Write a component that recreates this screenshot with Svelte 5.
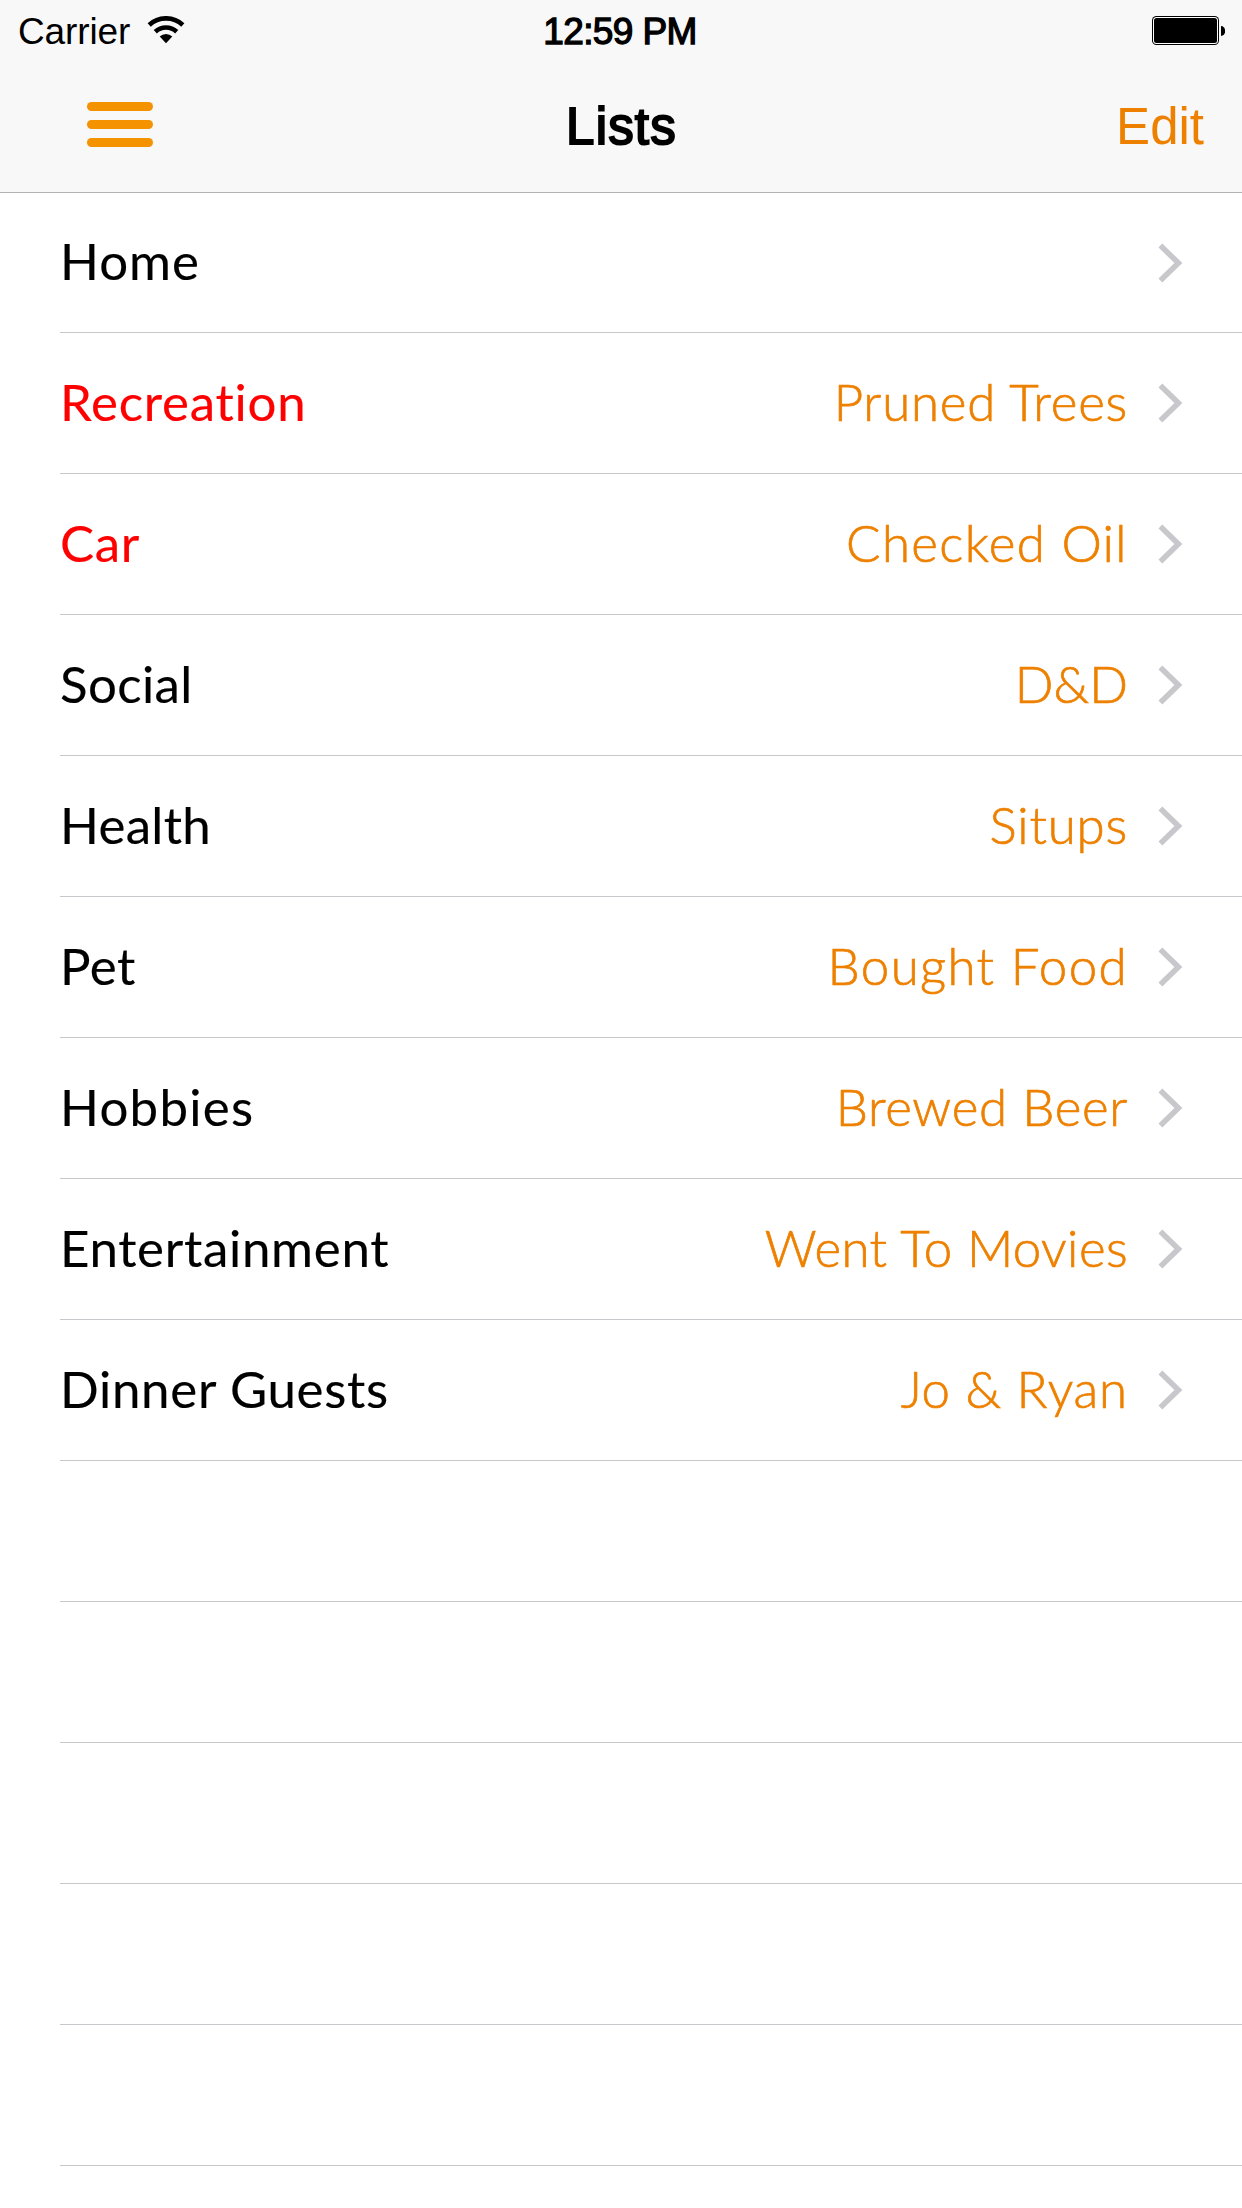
<script>
  // tracking values are letter-spacing in pixels
  const lists = [
    { name: 'Home', nameTracking: 1 },
    { name: 'Recreation', nameTracking: 0.75, due: true, last: 'Pruned Trees', lastTracking: 0.79 },
    { name: 'Car', nameTracking: 0.7, due: true, last: 'Checked Oil', lastTracking: 1.38 },
    { name: 'Social', nameTracking: 0.4, last: 'D&D', lastTracking: 0 },
    { name: 'Health', nameTracking: 0.3, last: 'Situps', lastTracking: 0.83 },
    { name: 'Pet', nameTracking: 0.49, last: 'Bought Food', lastTracking: 1.4 },
    { name: 'Hobbies', nameTracking: 1.27, last: 'Brewed Beer', lastTracking: 0.67 },
    { name: 'Entertainment', nameTracking: 0.7, last: 'Went To Movies', lastTracking: 0.42 },
    { name: 'Dinner Guests', nameTracking: 0.71, last: 'Jo & Ryan', lastTracking: 0.82 }
  ];
  const emptyRows = [1, 2, 3, 4, 5];
</script>

<div class="screen">
  <header>
    <div class="status">
      <div class="carrier">
        <span>Carrier</span>
        <svg class="wifi" width="38" height="28" viewBox="0 0 38 28">
          <path d="M2.2 8.9A24.8 24.8 0 0 1 35.8 8.9" fill="none" stroke="#000" stroke-width="4.7" />
          <path d="M8.3 15.7A15.7 15.7 0 0 1 29.7 15.7" fill="none" stroke="#000" stroke-width="4.6" />
          <path d="M19 27.2L12.7 20.6A9 9 0 0 1 25.3 20.6Z" />
        </svg>
      </div>
      <div class="clock">12:59 PM</div>
      <svg class="battery" width="73" height="29" viewBox="0 0 73 29" shape-rendering="geometricPrecision">
        <rect width="67" height="29" rx="4.5" />
        <rect x="1" y="1" width="65" height="27" rx="3.5" fill="#fff" />
        <rect x="2" y="2" width="63" height="25" rx="2.5" />
        <path d="M69 10a4.2 5 0 0 1 0 10z" />
      </svg>
    </div>
    <nav>
      <button class="menu" aria-label="Menu">
        <i></i><i></i><i></i>
      </button>
      <h1>Lists</h1>
      <button class="edit">Edit</button>
    </nav>
  </header>

  <ul>
    {#each lists as item}
      <li>
        <span class="name" class:due={item.due} style:letter-spacing="{item.nameTracking}px">{item.name}</span>
        {#if item.last}
          <span class="last" style:letter-spacing="{item.lastTracking}px">{item.last}</span>
        {/if}
        <svg class="chevron" width="25" height="40" viewBox="0 0 25 40">
          <path d="M2.4 2.6L20.4 20L2.4 37.4" fill="none" stroke="#c7c7cc" stroke-width="5.5" />
        </svg>
      </li>
    {/each}
    {#each emptyRows as row (row)}
      <li></li>
    {/each}
  </ul>
</div>

<style>
  :global(body) {
    margin: 0;
    background: #fff;
  }
  .screen {
    width: 1242px;
    height: 2208px;
    overflow: hidden;
    background: #fff;
    color: #000;
    font-family: "Liberation Sans", Arial, sans-serif;
  }
  header {
    box-sizing: border-box;
    height: 193px;
    background: #f8f8f8;
    border-bottom: 1px solid #b2b2b2;
  }
  .status,
  nav {
    display: grid;
    grid-template-columns: 1fr auto 1fr;
  }
  .status {
    height: 60px;
    padding: 0 17px 0 18px;
    font-size: 37px;
    line-height: 42px;
  }
  .carrier {
    display: flex;
    align-items: flex-start;
    gap: 16.5px;
    padding-top: 11px;
    letter-spacing: -0.12px;
  }
  .wifi {
    margin-top: 5px;
  }
  .clock {
    margin-left: -3px;
    padding-top: 11px;
    letter-spacing: -0.6px;
    -webkit-text-stroke: 1.3px #000;
  }
  .battery {
    justify-self: end;
    margin-top: 16px;
  }
  nav {
    height: 132px;
    align-items: start;
    padding: 0 38px 0 87px;
  }
  button {
    border: 0;
    padding: 0;
    background: none;
    font: inherit;
  }
  .menu {
    display: flex;
    flex-direction: column;
    gap: 9px;
    width: 66px;
    margin-top: 42px;
  }
  .menu i {
    height: 9px;
    border-radius: 4.5px;
    background: #f49200;
  }
  h1 {
    margin: 38px 0 0 -48px;
    font-size: 51px;
    line-height: 58px;
    font-weight: normal;
    letter-spacing: 1.2px;
    -webkit-text-stroke: 2px #000;
  }
  .edit {
    justify-self: end;
    margin-top: 38px;
    color: #ee8000;
    font-size: 51px;
    line-height: 58px;
  }
  ul {
    margin: 0;
    padding: 0 0 0 60px;
    list-style: none;
  }
  li {
    box-sizing: border-box;
    display: flex;
    align-items: center;
    height: 141px;
    padding-right: 59px;
    border-bottom: 1px solid #c8c7cc;
    font-family: Lato, sans-serif;
    font-size: 51px;
    line-height: 60px;
    white-space: nowrap;
    font-variant-ligatures: none;
  }
  li:first-child {
    height: 140px;
  }
  .name,
  .last {
    padding-bottom: 3px;
  }
  .name {
    -webkit-text-stroke: 0.15px currentColor;
  }
  .due {
    color: #f00;
  }
  .last {
    margin-left: auto;
    color: #ee8000;
    font-weight: 300;
    -webkit-text-stroke: 0.7px #ee8000;
  }
  .chevron {
    margin-left: 30px;
  }
  .name + .chevron {
    margin-left: auto;
  }
</style>
